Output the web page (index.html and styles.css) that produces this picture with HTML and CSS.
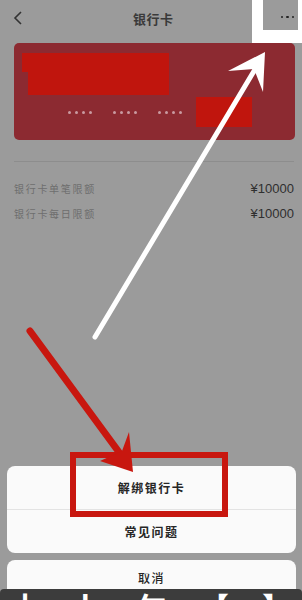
FILE: index.html
```html
<!DOCTYPE html>
<html lang="zh-CN">
<head>
<meta charset="utf-8">
<title>银行卡</title>
<link rel="stylesheet" href="styles.css">
</head>
<body>
<div class="screen">
  <header class="nav">
    <div class="nav-main">
      <svg class="back" width="10" height="14" viewBox="0 0 10 14"><path d="M8 1 L2 7 L8 13" fill="none" stroke="#333" stroke-width="1.6"/></svg>
      <span class="title">银行卡</span>
    </div>
    <div class="nav-more">
      <div class="more-box"><i></i><i></i><i></i></div>
    </div>
  </header>

  <section class="card">
    <div class="mask mask-name"></div>
    <div class="card-row">
      <div class="dots"><i></i><i></i><i></i><i></i></div>
      <div class="dots"><i></i><i></i><i></i><i></i></div>
      <div class="dots"><i></i><i></i><i></i><i></i></div>
      <div class="mask mask-tail"></div>
    </div>
  </section>

  <div class="divider"></div>

  <div class="limits">
    <div class="limit-row"><span class="label">银行卡单笔限额</span><span class="value">¥10000</span></div>
    <div class="limit-row"><span class="label">银行卡每日限额</span><span class="value">¥10000</span></div>
  </div>

  <div class="sheet">
    <div class="sheet-group">
      <div class="sheet-item">解绑银行卡</div>
      <div class="sheet-item sep">常见问题</div>
    </div>
    <div class="sheet-group cancel">
      <div class="sheet-item">取消</div>
    </div>
  </div>

  <div class="highlight"></div>

  <svg class="arrows" width="302" height="600" viewBox="0 0 302 600">
    <line x1="95" y1="337" x2="257" y2="66" stroke="#fff" stroke-width="5" stroke-linecap="round"/>
    <polygon points="265,52 228,71 254,69 263,92" fill="#fff"/>
    <line x1="30" y1="331" x2="124" y2="459" stroke="#c8170f" stroke-width="7" stroke-linecap="round"/>
    <polygon points="133,472 129,432 122,451 100,461" fill="#c8170f"/>
  </svg>

  <div class="caption"><span>十</span><span>卜</span><span>乍</span><span>【</span><span>】</span></div>
</div>
</body>
</html>
```

FILE: styles.css
```css
html, body {
  margin: 0;
  padding: 0;
}

.screen {
  position: relative;
  width: 302px;
  height: 600px;
  background: #9b9b9b;
  overflow: hidden;
  font-family: "Noto Sans CJK SC", "Liberation Sans", sans-serif;
}

.nav {
  display: flex;
  height: 43px;
}

.nav-main {
  width: 252px;
  height: 36px;
  display: flex;
  align-items: center;
  padding-left: 13px;
  box-sizing: border-box;
}

.back {
  display: block;
}

.title {
  margin-left: 110px;
  font-size: 13px;
  font-weight: 700;
  color: #3a3a3a;
  letter-spacing: 0.5px;
}

.nav-more {
  width: 50px;
  height: 43px;
  background: #fff;
  padding: 0 4px 13px 11px;
  box-sizing: border-box;
}

.more-box {
  height: 30px;
  background: #9b9b9b;
  display: flex;
  align-items: center;
  justify-content: flex-end;
  gap: 3px;
  padding-right: 4px;
  padding-top: 4px;
  box-sizing: border-box;
}

.more-box i {
  width: 2.5px;
  height: 2.5px;
  border-radius: 50%;
  background: #222;
}

.card {
  margin: 0 7px 0 14px;
  height: 97px;
  background: #8c2a31;
  border-radius: 5px;
  padding: 10px 8px 0 8px;
  box-sizing: border-box;
}

.mask {
  background: #c0150d;
}

.mask-name {
  width: 147px;
  height: 42px;
  clip-path: polygon(0 0, 100% 0, 100% 100%, 6px 100%, 6px 45%, 0 45%);
}

.card-row {
  display: flex;
  align-items: center;
  height: 30px;
  margin-top: 2px;
}

.dots {
  display: flex;
  gap: 4px;
  margin-right: 21px;
}

.dots:first-child {
  margin-left: 46px;
}

.dots i {
  width: 3px;
  height: 3px;
  border-radius: 50%;
  background: #c99aa0;
}

.card-row .dots:nth-child(3) {
  margin-right: 14px;
}

.mask-tail {
  width: 56px;
  height: 30px;
}

.divider {
  margin: 21px 8px 0 14px;
  height: 1px;
  background: #8d8d8d;
}

.limits {
  margin-top: 14px;
  padding: 0 8px 0 14px;
}

.limit-row {
  display: flex;
  justify-content: space-between;
  align-items: center;
  height: 25px;
}

.label {
  font-size: 10px;
  color: #6e6e6e;
  letter-spacing: 1.7px;
}

.value {
  font-family: "Liberation Sans", sans-serif;
  font-size: 13px;
  color: #2f2f2f;
}

.sheet {
  position: absolute;
  top: 466px;
  left: 7px;
  width: 289px;
  display: flex;
  flex-direction: column;
  gap: 7px;
}

.sheet-group {
  background: #fafafa;
  border-radius: 8px;
  overflow: hidden;
}

.sheet-item {
  height: 43px;
  display: flex;
  align-items: center;
  justify-content: center;
  font-size: 12px;
  font-weight: 700;
  color: #262626;
  letter-spacing: 1.5px;
}

.sheet-item.sep {
  height: 44px;
  border-top: 1px solid #e3e3e3;
  box-sizing: border-box;
}

.cancel {
  padding-bottom: 12px;
}

.cancel .sheet-item {
  height: 28px;
  line-height: 17px;
  align-items: flex-start;
  padding-top: 9px;
  box-sizing: border-box;
  font-weight: 500;
}

.highlight {
  position: absolute;
  left: 70px;
  top: 452px;
  width: 158px;
  height: 65px;
  border: 6px solid #c8170f;
  box-sizing: border-box;
}

.arrows {
  position: absolute;
  left: 0;
  top: 0;
}

.caption {
  position: absolute;
  left: 0;
  right: 0;
  bottom: 0;
  height: 11px;
  background: #3c3c3c;
  border-radius: 4px 4px 0 0;
  overflow: hidden;
  display: flex;
  align-items: flex-start;
  justify-content: space-between;
  padding: 0 10px;
  box-sizing: border-box;
}

.caption span {
  font-size: 30px;
  line-height: 11px;
  padding-top: 12px;
  color: #fff;
  font-weight: 700;
}
```
